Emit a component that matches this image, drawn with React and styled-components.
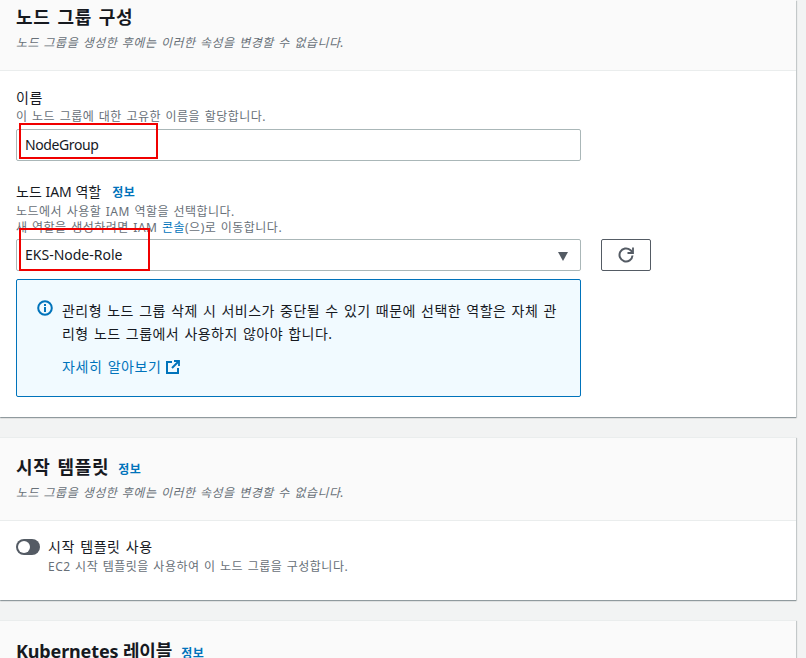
import React from "react";
import styled, { createGlobalStyle, css } from "styled-components";

const GlobalStyle = createGlobalStyle`
  html, body { margin: 0; padding: 0; height: 658px; overflow: hidden; background: #f2f3f3; }
  body { font-family: "Noto Sans", "Noto Sans CJK KR", sans-serif; color: #16191f; }
`;

// hangul in the shot runs wider than Noto, so open it up a little
const wide = css`
  letter-spacing: 0.04em;
  word-spacing: 0.08em;
`;

const Page = styled.div`
  width: 796px;
  display: flex;
  flex-direction: column;
  gap: 20px;
`;

const Card = styled.section`
  background: #fff;
  border-top: ${(p) => (p.$first ? "none" : "1px solid #eaeded")};
  box-shadow: 0 1px 1px 0 rgba(0, 28, 36, 0.3), 1px 1px 1px 0 rgba(0, 28, 36, 0.15);
`;

const CardHeader = styled.header`
  background: #fafafa;
  border-bottom: 1px solid #eaeded;
  padding: ${(p) => p.$top}px 16px 0;
  height: ${(p) => p.$height}px;
  box-sizing: border-box;
`;

const TitleRow = styled.div`
  display: flex;
  align-items: baseline;
  gap: 9px;
`;

const Title = styled.h2`
  margin: 0;
  font-size: 18px;
  line-height: 24px;
  font-weight: 700;
  ${(p) => (p.$latin ? "letter-spacing: -0.15px;" : wide)}
`;

const InfoLink = styled.a`
  font-size: 12px;
  font-weight: 700;
  color: #0073bb;
  line-height: 16px;
  ${wide}
`;

const Subtitle = styled.p`
  margin: ${(p) => p.$gap}px 0 0;
  font-size: 12px;
  line-height: 16px;
  font-style: italic;
  color: #687078;
  ${wide}
`;

const CardBody = styled.div`
  padding: ${(p) => p.$pad};
  height: ${(p) => p.$height}px;
  box-sizing: border-box;
`;

const Field = styled.div`
  margin-bottom: ${(p) => p.$gap || 0}px;
`;

const LabelRow = styled.div`
  display: flex;
  align-items: baseline;
  gap: 11px;
`;

const Label = styled.label`
  display: block;
  font-size: 14px;
  line-height: 20px;
  ${(p) => !p.$plain && wide}
`;

const Hint = styled.div`
  margin-top: ${(p) => p.$gap || 0}px;
  font-size: 12px;
  line-height: 16px;
  color: #687078;
  ${wide}

  a { color: #0073bb; }
`;

const ControlRow = styled.div`
  display: flex;
  align-items: center;
  gap: 20px;
  margin-top: ${(p) => p.$gap}px;
`;

const Control = styled.div`
  position: relative;
  width: 565px;
  height: 32px;
  box-sizing: border-box;
  border: 1px solid #aab7b8;
  border-radius: 2px;
  background: #fff;
  padding: 0 0 2px 8px;
  display: flex;
  align-items: center;
  justify-content: space-between;
  font-size: 14px;
  letter-spacing: ${(p) => p.$tracking || 0}px;
`;

const Caret = styled.span`
  width: 0;
  height: 0;
  margin: 4px 12px 0 0;
  border-left: 5px solid transparent;
  border-right: 5px solid transparent;
  border-top: 9px solid #545b64;
`;

const RedBox = styled.span`
  position: absolute;
  left: 2px;
  top: ${(p) => p.$top}px;
  width: ${(p) => p.$w}px;
  height: ${(p) => p.$h}px;
  border: 2px solid #f00000;
  box-sizing: border-box;
  pointer-events: none;
`;

const IconButton = styled.button`
  width: 50px;
  height: 32px;
  box-sizing: border-box;
  border: 1px solid #545b64;
  border-radius: 2px;
  background: #fff;
  padding: 0;
  display: flex;
  align-items: center;
  justify-content: center;
`;

const Alert = styled.div`
  margin-top: 8px;
  width: 565px;
  height: 118px;
  box-sizing: border-box;
  border: 1px solid #0073bb;
  border-radius: 2px;
  background: #f1faff;
  padding: 19px 20px 0 20px;
  display: flex;
  gap: 9px;
`;

const AlertIcon = styled.svg`
  flex: none;
  width: 16px;
  height: 16px;
  margin-top: 1px;
`;

const AlertText = styled.p`
  margin: 0;
  font-size: 14px;
  line-height: 23px;
  word-break: break-all;
  ${wide}
  letter-spacing: 0.033em;
`;

const ExternalLink = styled.a`
  display: flex;
  align-items: center;
  gap: 5px;
  margin-top: 10px;
  font-size: 14px;
  line-height: 24px;
  color: #0073bb;
  ${wide}
`;

const ToggleRow = styled.div`
  display: flex;
  gap: 8px;
`;

const Toggle = styled.span`
  flex: none;
  width: 24px;
  height: 16px;
  margin-top: 2px;
  border-radius: 8px;
  background: #545b64;
  position: relative;

  &::after {
    content: "";
    position: absolute;
    left: 2px;
    top: 2px;
    width: 12px;
    height: 12px;
    border-radius: 50%;
    background: #fff;
  }
`;

function RefreshIcon() {
  return (
    <svg width="18" height="18" viewBox="0 0 18 18" fill="none" stroke="#545b64" strokeWidth="2">
      <path d="M15.5 9.5a6.5 6.5 0 1 1-2.2-5.4L15.5 6" />
      <path d="M16 1.5V7h-5.5" strokeWidth="1.8" />
    </svg>
  );
}

function InfoIcon() {
  return (
    <AlertIcon viewBox="0 0 16 16" fill="none">
      <circle cx="8" cy="8" r="6.8" stroke="#0073bb" strokeWidth="2" />
      <rect x="7" y="7" width="2" height="5" fill="#0073bb" />
      <rect x="7" y="4" width="2" height="2" fill="#0073bb" />
    </AlertIcon>
  );
}

function ExternalIcon() {
  return (
    <svg width="14" height="14" viewBox="0 0 14 14" fill="none" stroke="#0073bb" strokeWidth="2">
      <path d="M6 2H1v11h11V8" />
      <path d="M8 1h5v5" strokeWidth="1.8" />
      <path d="M13 1 6 8" />
    </svg>
  );
}

export default function App() {
  return (
    <>
      <GlobalStyle />
      <Page>
        <Card $first>
          <CardHeader $top={5} $height={71}>
            <Title>노드 그룹 구성</Title>
            <Subtitle $gap={6}>노드 그룹을 생성한 후에는 이러한 속성을 변경할 수 없습니다.</Subtitle>
          </CardHeader>
          <CardBody $pad="17px 16px 0" $height={346}>
            <Field $gap={21}>
              <Label>이름</Label>
              <Hint $gap={1}>이 노드 그룹에 대한 고유한 이름을 할당합니다.</Hint>
              <ControlRow $gap={4}>
                <Control $tracking={-0.4}>
                  NodeGroup
                  <RedBox $top={-7} $w={139} $h={36} />
                </Control>
              </ControlRow>
            </Field>
            <Field>
              <LabelRow>
                <Label $plain>노드 IAM 역할</Label>
                <InfoLink>정보</InfoLink>
              </LabelRow>
              <Hint $gap={2}>노드에서 사용할 IAM 역할을 선택합니다.</Hint>
              <Hint>
                새 역할을 생성하려면 IAM <a>콘솔</a>(으)로 이동합니다.
              </Hint>
              <ControlRow $gap={3}>
                <Control>
                  EKS-Node-Role
                  <Caret />
                  <RedBox $top={-12} $w={131} $h={43} />
                </Control>
                <IconButton aria-label="새로 고침">
                  <RefreshIcon />
                </IconButton>
              </ControlRow>
              <Alert>
                <InfoIcon />
                <div>
                  <AlertText>
                    관리형 노드 그룹 삭제 시 서비스가 중단될 수 있기 때문에 선택한 역할은 자체 관리형 노드 그룹에서 사용하지 않아야 합니다.
                  </AlertText>
                  <ExternalLink>
                    자세히 알아보기
                    <ExternalIcon />
                  </ExternalLink>
                </div>
              </Alert>
            </Field>
          </CardBody>
        </Card>

        <Card>
          <CardHeader $top={17} $height={83}>
            <TitleRow>
              <Title>시작 템플릿</Title>
              <InfoLink>정보</InfoLink>
            </TitleRow>
            <Subtitle $gap={6}>노드 그룹을 생성한 후에는 이러한 속성을 변경할 수 없습니다.</Subtitle>
          </CardHeader>
          <CardBody $pad="16px 16px 0" $height={79}>
            <ToggleRow>
              <Toggle />
              <div>
                <Label>시작 템플릿 사용</Label>
                <Hint $gap={2}>EC2 시작 템플릿을 사용하여 이 노드 그룹을 구성합니다.</Hint>
              </div>
            </ToggleRow>
          </CardBody>
        </Card>

        <Card>
          <CardHeader $top={18} $height={83}>
            <TitleRow>
              <Title $latin>Kubernetes 레이블</Title>
              <InfoLink>정보</InfoLink>
            </TitleRow>
          </CardHeader>
        </Card>
      </Page>
    </>
  );
}
